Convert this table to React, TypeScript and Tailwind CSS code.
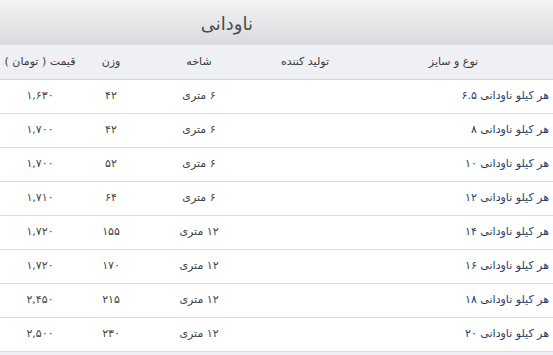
const rows = [
  { type: "هر کیلو ناودانی ۶.۵", len: "۶ متری", weight: "۴۲", price: "۱,۶۳۰" },
  { type: "هر کیلو ناودانی ۸", len: "۶ متری", weight: "۴۲", price: "۱,۷۰۰" },
  { type: "هر کیلو ناودانی ۱۰", len: "۶ متری", weight: "۵۲", price: "۱,۷۰۰" },
  { type: "هر کیلو ناودانی ۱۲", len: "۶ متری", weight: "۶۴", price: "۱,۷۱۰" },
  { type: "هر کیلو ناودانی ۱۴", len: "۱۲ متری", weight: "۱۵۵", price: "۱,۷۲۰" },
  { type: "هر کیلو ناودانی ۱۶", len: "۱۲ متری", weight: "۱۷۰", price: "۱,۷۲۰" },
  { type: "هر کیلو ناودانی ۱۸", len: "۱۲ متری", weight: "۲۱۵", price: "۲,۴۵۰" },
  { type: "هر کیلو ناودانی ۲۰", len: "۱۲ متری", weight: "۲۳۰", price: "۲,۵۰۰" },
];

const cols = "grid grid-cols-[199px_98px_114px_62px_80px]";

export default function App() {
  return (
    <div dir="rtl" className="w-[553px] h-[355px] bg-[#eef0f4] font-['DejaVu_Sans',sans-serif] overflow-hidden">
      {/* title bar */}
      <div className="h-[45px] flex items-center pr-[300px] pt-[2px] bg-gradient-to-b from-[#f4f4f5] to-[#d9dadd]">
        <h1 className="text-[18px] text-[#4a4a4a]">ناودانی</h1>
      </div>

      {/* table head */}
      <div className={`${cols} h-[35px] items-center bg-[#eef0f4] border-b border-[#d3d6db] text-[11px] text-[#3a3a3a]`}>
        <div className="text-center">نوع و سایز</div>
        <div className="text-center">تولید کننده</div>
        <div className="text-center">شاخه</div>
        <div className="text-center">وزن</div>
        <div className="text-center">قیمت ( تومان )</div>
      </div>

      {/* table body */}
      <div className="bg-white">
        {rows.map((r) => (
          <div key={r.type} className={`${cols} h-[34px] items-center border-b border-[#d8dbe0] text-[11px] text-[#444]`}>
            <div className="pr-[4px] text-[#2c3d63]">{r.type}</div>
            <div></div>
            <div className="text-center">{r.len}</div>
            <div className="text-center">{r.weight}</div>
            <div className="text-center">{r.price}</div>
          </div>
        ))}
      </div>
    </div>
  );
}
